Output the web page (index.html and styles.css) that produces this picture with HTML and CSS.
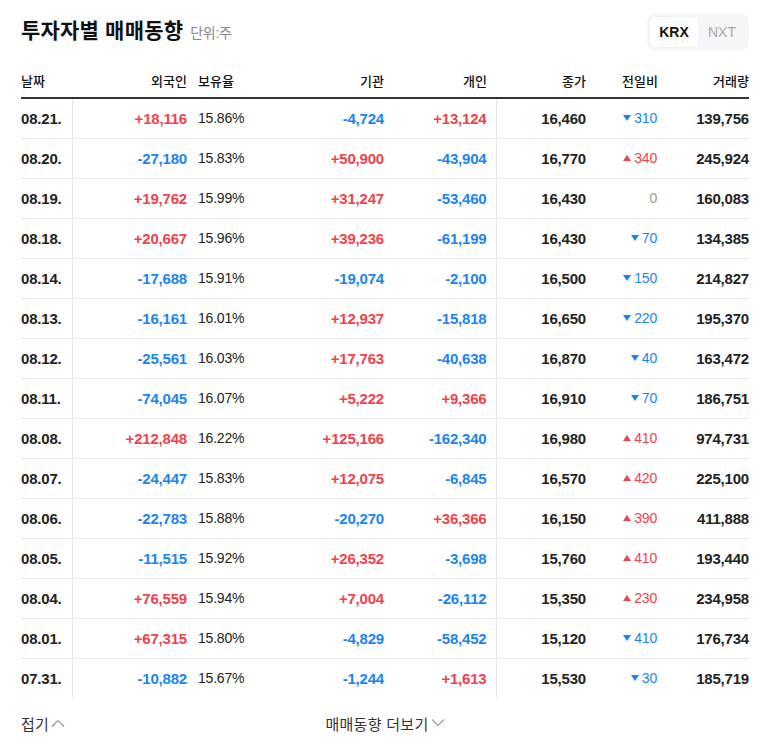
FILE: index.html
```html
<!DOCTYPE html>
<html lang="ko">
<head>
<meta charset="utf-8">
<link rel="stylesheet" href="styles.css">
</head>
<body>
<div class="panel">
  <div class="head">
    <h2 class="title">투자자별 매매동향 <span class="unit">단위:주</span></h2>
    <div class="toggle">
      <button class="tab active">KRX</button>
      <button class="tab">NXT</button>
    </div>
  </div>
  <table class="trade">
    <colgroup>
      <col class="c-date"><col class="c-frg"><col class="c-ratio"><col class="c-inst"><col class="c-ind"><col class="c-close"><col class="c-diff"><col class="c-vol">
    </colgroup>
    <thead>
      <tr>
        <th class="l">날짜</th><th class="r frg">외국인</th><th class="l ratio">보유율</th><th class="r">기관</th><th class="r ind">개인</th><th class="r close">종가</th><th class="r">전일비</th><th class="r">거래량</th>
      </tr>
    </thead>
    <tbody>
      <tr><td class="date">08.21.</td><td class="frg up">+18,116</td><td class="ratio">15.86%</td><td class="num dn">-4,724</td><td class="ind up">+13,124</td><td class="close">16,460</td><td class="diff dn"><i class="tri-dn"></i>310</td><td class="vol">139,756</td></tr>
      <tr><td class="date">08.20.</td><td class="frg dn">-27,180</td><td class="ratio">15.83%</td><td class="num up">+50,900</td><td class="ind dn">-43,904</td><td class="close">16,770</td><td class="diff up"><i class="tri-up"></i>340</td><td class="vol">245,924</td></tr>
      <tr><td class="date">08.19.</td><td class="frg up">+19,762</td><td class="ratio">15.99%</td><td class="num up">+31,247</td><td class="ind dn">-53,460</td><td class="close">16,430</td><td class="diff eq">0</td><td class="vol">160,083</td></tr>
      <tr><td class="date">08.18.</td><td class="frg up">+20,667</td><td class="ratio">15.96%</td><td class="num up">+39,236</td><td class="ind dn">-61,199</td><td class="close">16,430</td><td class="diff dn"><i class="tri-dn"></i>70</td><td class="vol">134,385</td></tr>
      <tr><td class="date">08.14.</td><td class="frg dn">-17,688</td><td class="ratio">15.91%</td><td class="num dn">-19,074</td><td class="ind dn">-2,100</td><td class="close">16,500</td><td class="diff dn"><i class="tri-dn"></i>150</td><td class="vol">214,827</td></tr>
      <tr><td class="date">08.13.</td><td class="frg dn">-16,161</td><td class="ratio">16.01%</td><td class="num up">+12,937</td><td class="ind dn">-15,818</td><td class="close">16,650</td><td class="diff dn"><i class="tri-dn"></i>220</td><td class="vol">195,370</td></tr>
      <tr><td class="date">08.12.</td><td class="frg dn">-25,561</td><td class="ratio">16.03%</td><td class="num up">+17,763</td><td class="ind dn">-40,638</td><td class="close">16,870</td><td class="diff dn"><i class="tri-dn"></i>40</td><td class="vol">163,472</td></tr>
      <tr><td class="date">08.11.</td><td class="frg dn">-74,045</td><td class="ratio">16.07%</td><td class="num up">+5,222</td><td class="ind up">+9,366</td><td class="close">16,910</td><td class="diff dn"><i class="tri-dn"></i>70</td><td class="vol">186,751</td></tr>
      <tr><td class="date">08.08.</td><td class="frg up">+212,848</td><td class="ratio">16.22%</td><td class="num up">+125,166</td><td class="ind dn">-162,340</td><td class="close">16,980</td><td class="diff up"><i class="tri-up"></i>410</td><td class="vol">974,731</td></tr>
      <tr><td class="date">08.07.</td><td class="frg dn">-24,447</td><td class="ratio">15.83%</td><td class="num up">+12,075</td><td class="ind dn">-6,845</td><td class="close">16,570</td><td class="diff up"><i class="tri-up"></i>420</td><td class="vol">225,100</td></tr>
      <tr><td class="date">08.06.</td><td class="frg dn">-22,783</td><td class="ratio">15.88%</td><td class="num dn">-20,270</td><td class="ind up">+36,366</td><td class="close">16,150</td><td class="diff up"><i class="tri-up"></i>390</td><td class="vol">411,888</td></tr>
      <tr><td class="date">08.05.</td><td class="frg dn">-11,515</td><td class="ratio">15.92%</td><td class="num up">+26,352</td><td class="ind dn">-3,698</td><td class="close">15,760</td><td class="diff up"><i class="tri-up"></i>410</td><td class="vol">193,440</td></tr>
      <tr><td class="date">08.04.</td><td class="frg up">+76,559</td><td class="ratio">15.94%</td><td class="num up">+7,004</td><td class="ind dn">-26,112</td><td class="close">15,350</td><td class="diff up"><i class="tri-up"></i>230</td><td class="vol">234,958</td></tr>
      <tr><td class="date">08.01.</td><td class="frg up">+67,315</td><td class="ratio">15.80%</td><td class="num dn">-4,829</td><td class="ind dn">-58,452</td><td class="close">15,120</td><td class="diff dn"><i class="tri-dn"></i>410</td><td class="vol">176,734</td></tr>
      <tr><td class="date">07.31.</td><td class="frg dn">-10,882</td><td class="ratio">15.67%</td><td class="num dn">-1,244</td><td class="ind up">+1,613</td><td class="close">15,530</td><td class="diff dn"><i class="tri-dn"></i>30</td><td class="vol">185,719</td></tr>
    </tbody>
  </table>
  <div class="foot">
    <button class="link fold">접기<svg class="chev" width="14" height="8" viewBox="0 0 14 8"><path d="M1 7.5 L7 1.5 L13 7.5" fill="none" stroke="#999" stroke-width="1.2"/></svg></button>
    <button class="link more">매매동향 더보기<svg class="chev" width="14" height="8" viewBox="0 0 14 8"><path d="M1 0.5 L7 6.5 L13 0.5" fill="none" stroke="#999" stroke-width="1.2"/></svg></button>
    <span></span>
  </div>
</div>
</body>
</html>
```
FILE: styles.css
```css
* { box-sizing: border-box; }
html, body { margin: 0; background: #fff; }
body {
  font-family: "Liberation Sans", "Noto Sans CJK KR", sans-serif;
  color: #222;
}
.panel {
  width: 768px;
  padding: 14px 19px 0 21px;
}
.head {
  display: flex;
  justify-content: space-between;
  align-items: center;
  height: 36px;
}
.title {
  margin: 0;
  font-size: 21px;
  font-weight: 700;
  line-height: 28px;
  color: #111;
  letter-spacing: 0.2px;
}
.unit {
  font-size: 14px;
  font-weight: 400;
  color: #888;
  margin-left: 1px;
  letter-spacing: -0.3px;
}
.toggle {
  display: flex;
  background: #f4f5f7;
  border-radius: 7px;
  padding: 3px;
  height: 36px;
  width: 102px;
}
.tab {
  border: 0;
  background: transparent;
  font-family: "Liberation Sans", sans-serif;
  font-size: 14px;
  color: #aaa;
  width: 48px;
  height: 30px;
  padding: 0;
  border-radius: 5px;
  cursor: pointer;
}
.tab.active {
  background: #fff;
  color: #111;
  font-weight: 700;
  box-shadow: 0 0 2px rgba(0,0,0,0.06);
}
.trade {
  width: 728px;
  margin-top: 14px;
  border-collapse: collapse;
  table-layout: fixed;
}
.c-date { width: 51px; }
.c-frg { width: 116px; }
.c-ratio { width: 102px; }
.c-inst { width: 94px; }
.c-ind { width: 112px; }
.c-close { width: 91px; }
.c-diff { width: 71px; }
.c-vol { width: 91px; }
th {
  height: 34px;
  padding: 0;
  font-size: 13px;
  font-weight: 500;
  color: #111;
  border-bottom: 2px solid #333;
  vertical-align: middle;
  white-space: nowrap;
}
th.l { text-align: left; }
th.r { text-align: right; }
th.frg { padding-right: 1px; }
th.ratio { padding-left: 10px; }
th.ind { padding-right: 9px; }
th.close { padding-right: 1px; }
td {
  height: 40px;
  padding: 0;
  font-size: 15px;
  font-weight: 700;
  text-align: right;
  border-bottom: 1px solid #ebebeb;
  white-space: nowrap;
  letter-spacing: -0.2px;
}
tbody tr:last-child td { border-bottom: 0; }
td.date { text-align: left; color: #222; border-right: 1px solid #e8e8e8; }
td.frg { padding-right: 1px; }
td.ratio { text-align: left; padding-left: 10px; font-size: 14px; font-weight: 400; color: #222; }
td.ind { padding-right: 9px; border-right: 1px solid #e8e8e8; }
td.close { padding-right: 1px; color: #222; }
td.diff { font-size: 14px; font-weight: 400; padding-right: 1px; }
td.vol { color: #222; }
.up { color: #f0424c; }
.dn { color: #1a84f0; }
.eq { color: #999; }
.tri-dn, .tri-up {
  display: inline-block;
  width: 0; height: 0;
  border-left: 4px solid transparent;
  border-right: 4px solid transparent;
  margin-right: 3px;
  vertical-align: 2px;
}
.tri-dn { border-top: 6px solid #1a84f0; }
.tri-up { border-bottom: 6px solid #f0424c; }
.foot {
  display: grid;
  grid-template-columns: 1fr auto 1fr;
  align-items: center;
  height: 50px;
}
.link {
  border: 0;
  background: none;
  padding: 0;
  font-family: "Liberation Sans", "Noto Sans CJK KR", sans-serif;
  font-size: 15px;
  letter-spacing: 0.3px;
  color: #333;
  display: inline-flex;
  align-items: center;
  cursor: pointer;
}
.fold { justify-self: start; }
.more { justify-self: center; }
.chev { margin-left: 2px; }
```
